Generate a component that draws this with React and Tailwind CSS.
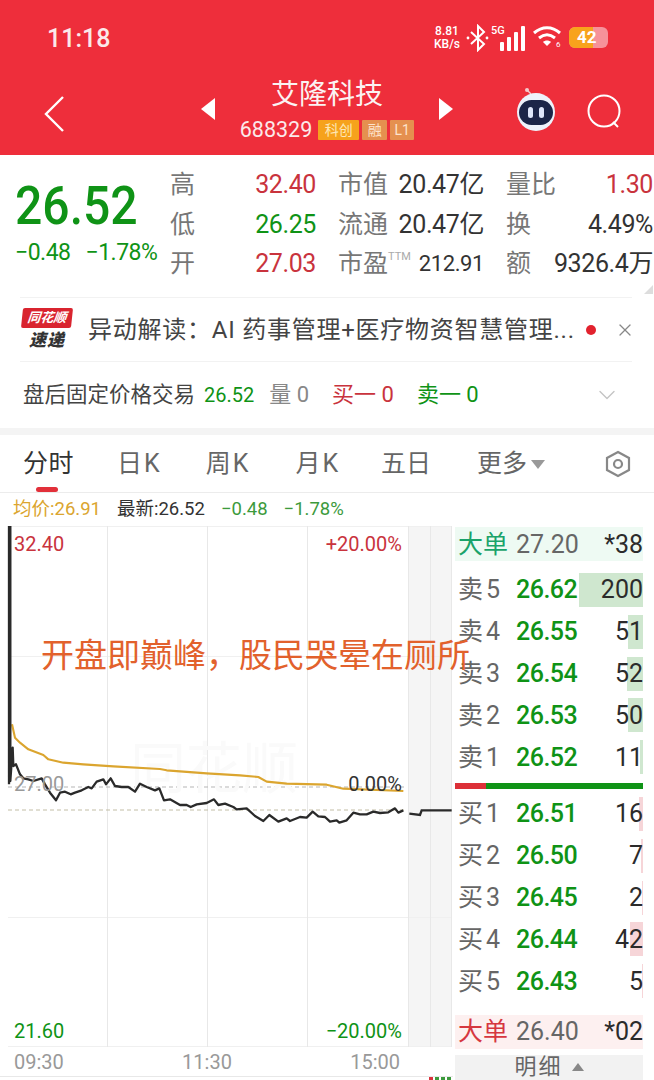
import React from 'react';
import { X, ChevronDown } from 'lucide-react';

const priceLine = [[27,280],[27,-495],[31,-495],[31,270],[38,170],[40,225],[48,220],[60,250],[70,262],[85,265],[100,270],[125,262],[135,280],[150,305],[168,328],[180,305],[195,302],[212,310],[225,305],[245,298],[265,288],[275,292],[290,272],[310,265],[318,280],[332,262],[345,285],[365,288],[385,288],[405,302],[420,278],[440,288],[465,298],[478,292],[492,328],[510,325],[540,342],[560,342],[572,348],[590,340],[620,336],[642,325],[655,342],[675,338],[700,348],[710,355],[740,352],[765,375],[790,390],[808,372],[835,392],[860,382],[870,390],[900,378],[920,380],[938,362],[955,376],[975,378],[990,392],[1010,388],[1018,395],[1040,388],[1060,365],[1080,370],[1100,370],[1120,362],[1140,366],[1165,364],[1185,352],[1195,365],[1210,358]];
const afterLine = [[1228,368],[1260,372],[1265,358],[1355,358]];
const avgLine = [[36,100],[45,140],[60,155],[85,175],[130,192],[145,205],[190,215],[250,220],[340,226],[480,234],[500,238],[620,247],[720,253],[775,258],[800,272],[860,278],[980,281],[1030,293],[1210,300]];

const toPoints = (pts) => pts.map(([x, y]) => `${x / 3},${y / 3 + 165}`).join(' ');

const stats = [
  [
    { label: '高', value: '32.40', color: 'text-[#c9333d]', size: 'text-[25px]' },
    { label: '市值', value: '20.47亿', color: 'text-[#333]', size: 'text-[25px]' },
    { label: '量比', value: '1.30', color: 'text-[#c9333d]', size: 'text-[25px]' },
  ],
  [
    { label: '低', value: '26.25', color: 'text-[#0f9316]', size: 'text-[25px]' },
    { label: '流通', value: '20.47亿', color: 'text-[#333]', size: 'text-[25px]' },
    { label: '换', value: '4.49%', color: 'text-[#333]', size: 'text-[25px]' },
  ],
  [
    { label: '开', value: '27.03', color: 'text-[#c9333d]', size: 'text-[25px]' },
    { label: '市盈', tm: true, value: '212.91', color: 'text-[#333]', size: 'text-[22px]' },
    { label: '额', value: '9326.4万', color: 'text-[#333]', size: 'text-[25px]' },
  ],
];

const asks = [
  { name: '卖', n: 5, price: '26.62', qty: '200', w: 64 },
  { name: '卖', n: 4, price: '26.55', qty: '51', w: 15 },
  { name: '卖', n: 3, price: '26.54', qty: '52', w: 16 },
  { name: '卖', n: 2, price: '26.53', qty: '50', w: 15 },
  { name: '卖', n: 1, price: '26.52', qty: '11', w: 3 },
];

const bids = [
  { name: '买', n: 1, price: '26.51', qty: '16', w: 4 },
  { name: '买', n: 2, price: '26.50', qty: '7', w: 2 },
  { name: '买', n: 3, price: '26.45', qty: '2', w: 1 },
  { name: '买', n: 4, price: '26.44', qty: '42', w: 13 },
  { name: '买', n: 5, price: '26.43', qty: '5', w: 1 },
];

const StatusIcons = () => (
  <div className="flex items-center">
    <div className="flex w-[30px] flex-col items-center text-[12px] leading-[13px] font-medium text-white">
      <span>8.81</span>
      <span>KB/s</span>
    </div>
    <svg width="26" height="28" viewBox="0 0 26 28" fill="none" stroke="#fff" strokeWidth="2" className="ml-[3px]">
      <path d="M6 8l13 12-6 6V2l6 6L6 20" />
      <circle cx="3" cy="14" r="1.4" fill="#fff" stroke="none" />
      <circle cx="22" cy="14" r="1.4" fill="#fff" stroke="none" />
    </svg>
    <svg width="40" height="28" viewBox="0 0 40 28" className="-ml-[2px]">
      <text x="2" y="10" fontSize="11" fill="#fff" fontWeight="500" fontFamily="Roboto">5G</text>
      <rect x="11" y="18" width="4" height="9" rx="1" fill="#fff" />
      <rect x="18" y="13" width="4" height="14" rx="1" fill="#fff" />
      <rect x="25" y="8" width="4" height="19" rx="1" fill="#fff" />
      <rect x="32" y="2" width="4" height="25" rx="1" fill="#fff" />
    </svg>
    <svg width="32" height="28" viewBox="0 0 32 28" fill="none" stroke="#fff" strokeWidth="3" className="ml-[3px]">
      <path d="M2 9c8-7 18-7 26 0" />
      <path d="M7 14c5-4 11-4 16 0" />
      <path d="M15 22l-4-4c2-2 6-2 8 0z" fill="#fff" stroke="none" />
      <text x="24" y="23" fontSize="8" fill="#fff" stroke="none" fontFamily="Roboto">6</text>
    </svg>
    <div className="relative ml-[5px] flex h-[21px] w-[39px] items-center overflow-hidden rounded-[6px] bg-[#f6929a]">
      <div className="h-full w-[24px] bg-[#f8a31c]" />
      <span className="absolute left-[8px] top-0 text-[17px] leading-[21px] font-bold text-white">42</span>
    </div>
  </div>
);

const BotIcon = () => (
  <svg width="44" height="46" viewBox="0 0 44 46">
    <path d="M17 8l-4-4" stroke="#f4c9cc" strokeWidth="1.5" />
    <circle cx="13" cy="4" r="2" fill="#f4c9cc" />
    <circle cx="22" cy="26" r="19" fill="#eef2fb" />
    <rect x="5" y="14" width="34" height="25" rx="12.5" fill="#1c2548" />
    <rect x="14" y="21" width="5" height="11" rx="2.5" fill="#dfe6fa" />
    <rect x="25" y="21" width="5" height="11" rx="2.5" fill="#dfe6fa" />
  </svg>
);

const LogoBadge = () => (
  <div className="flex w-[50px] flex-col items-center">
    <div className="h-[20px] w-[50px] -skew-x-6 rounded-[2px] bg-[#d9242f] text-center text-[13px] leading-[20px] font-bold italic text-white">同花顺</div>
    <div className="mt-[1px] text-[17px] leading-[22px] font-black italic tracking-[1px] text-[#333]">速递</div>
  </div>
);

const BookRow = ({ row, barColor }) => (
  <div className="relative flex h-[41.8px] items-center">
    <div className={`absolute right-0 top-[4px] h-[34px] ${barColor}`} style={{ width: row.w }} />
    <span className="relative w-[27px] text-[25px] leading-none text-[#666]">{row.name}</span>
    <span className="relative w-[31px] pl-[1px] text-[25px] leading-none text-[#666]">{row.n}</span>
    <span className="relative w-[60px] text-[25px] leading-none font-medium tracking-[-0.5px] text-[#0f9316]">{row.price}</span>
    <span className="relative flex-1 text-right text-[25px] leading-none text-[#2b2b2b]">{row.qty}</span>
  </div>
);

const BigOrder = ({ color, bg, price, qty }) => (
  <div className={`flex h-[34px] items-center ${bg}`}>
    <span className={`w-[61px] pl-[3px] text-[25px] leading-none ${color}`}>大单</span>
    <span className="w-[65px] text-[25px] leading-none text-[#666]">{price}</span>
    <span className="flex-1 text-right text-[25px] leading-none text-[#2b2b2b]">{qty}</span>
  </div>
);

const Chart = () => (
  <div className="relative h-[521px]">
    <svg width="453" height="521" viewBox="0 0 453 521" className="block">
      <rect x="408" y="0" width="43" height="521" fill="#f5f5f5" />
      <g stroke="#f0f0f0" strokeWidth="1">
        <line x1="8" y1="0.5" x2="452" y2="0.5" />
        <line x1="8" y1="130.5" x2="452" y2="130.5" />
        <line x1="8" y1="391.5" x2="452" y2="391.5" />
        <line x1="8" y1="520.5" x2="452" y2="520.5" />
      </g>
      <g stroke="#e8e8e8" strokeWidth="1">
        <line x1="107.5" y1="0" x2="107.5" y2="521" />
        <line x1="207.5" y1="0" x2="207.5" y2="521" />
        <line x1="307.5" y1="0" x2="307.5" y2="521" />
        <line x1="408.5" y1="0" x2="408.5" y2="521" />
        <line x1="430.5" y1="0" x2="430.5" y2="521" />
        <line x1="451.5" y1="0" x2="451.5" y2="521" />
      </g>
      <line x1="8" y1="261" x2="404" y2="261" stroke="#b5b5b5" strokeWidth="1" strokeDasharray="4 3" />
      <line x1="8" y1="284" x2="404" y2="284" stroke="#c2bda5" strokeWidth="1" strokeDasharray="4 3" />
      <text x="130" y="262" fontSize="56" fill="#fafafa" fontFamily="'Noto Sans CJK SC'">同花顺</text>
      <polyline points={toPoints(avgLine)} fill="none" stroke="#dba52f" strokeWidth="2.1" strokeLinejoin="round" />
      <polyline points={toPoints(priceLine)} fill="none" stroke="#2a2a2a" strokeWidth="2.3" strokeLinejoin="round" />
      <polyline points={toPoints(afterLine)} fill="none" stroke="#2a2a2a" strokeWidth="2.3" />
    </svg>
    <span className="absolute left-[14px] top-[6px] text-[20px] leading-[24px] text-[#c9333d]">32.40</span>
    <span className="absolute right-[51px] top-[6px] text-[20px] leading-[24px] text-[#c9333d]">+20.00%</span>
    <span className="absolute left-[14px] top-[246px] text-[20px] leading-[24px] text-[#999]">27.00</span>
    <span className="absolute right-[51px] top-[246px] text-[20px] leading-[24px] text-[#333]">0.00%</span>
    <span className="absolute bottom-[4px] left-[14px] text-[20px] leading-[24px] text-[#0f9316]">21.60</span>
    <span className="absolute bottom-[4px] right-[51px] text-[20px] leading-[24px] text-[#0f9316]">−20.00%</span>
  </div>
);

export default function App() {
  return (
    <div className="relative h-[1080px] w-[654px] overflow-hidden bg-white font-['Roboto','Noto_Sans_CJK_SC',sans-serif]">
      {/* Red header */}
      <div className="h-[155px] bg-[#ee2e3b]">
        <div className="flex h-[75px] items-center justify-between pl-[47px] pr-[46px]">
          <span className="mt-[2px] text-[25px] leading-none font-medium text-[#fbe9ea]">11:18</span>
          <StatusIcons />
        </div>
        <div className="grid grid-cols-[190px_274px_190px]">
          <div className="pl-[43px] pt-[20px]">
            <svg width="23" height="38" viewBox="0 0 23 38" fill="none" stroke="#fff" strokeWidth="2.4">
              <path d="M20 2L3 19l17 17" />
            </svg>
          </div>
          <div className="flex items-center justify-between px-[11px]">
            <div className="h-0 w-0 border-y-[11px] border-r-[14px] border-y-transparent border-r-white" />
            <div className="flex flex-col items-center">
              <span className="text-[28px] leading-[40px] text-[#fbf3f3]">艾隆科技</span>
              <div className="mt-[2px] flex items-center">
                <span className="text-[21.5px] leading-[26px] text-[#fbe9ea]">688329</span>
                <span className="ml-[6px] h-[20px] w-[41px] rounded-[1px] bg-[#f6a21c] text-center text-[14px] leading-[20px] text-[#fde8b8]">科创</span>
                <span className="ml-[3px] h-[20px] w-[25px] rounded-[1px] bg-[#e5904f] text-center text-[14px] leading-[20px] text-[#fde3cc]">融</span>
                <span className="ml-[3px] h-[20px] w-[24px] rounded-[1px] bg-[#e5904f] text-center text-[14px] leading-[20px] text-[#fde3cc]">L1</span>
              </div>
            </div>
            <div className="h-0 w-0 border-y-[11px] border-l-[14px] border-y-transparent border-l-white" />
          </div>
          <div className="flex items-center pl-[50px]">
            <BotIcon />
            <svg width="38" height="38" viewBox="0 0 38 38" fill="none" stroke="#fff" strokeWidth="2" className="ml-[28px] mt-[6px]">
              <circle cx="18" cy="18" r="15.5" />
              <path d="M27 29l5 5" />
            </svg>
          </div>
        </div>
      </div>

      {/* Quote */}
      <div className="relative flex h-[142px]">
        <div className="w-[170px] shrink-0 pl-[15px] pt-[20px]">
          <div className="origin-left scale-x-[0.89] text-[54px] leading-[62px] font-medium text-[#0f9316]">26.52</div>
          <div className="mt-[2px] flex gap-[15px] text-[23px] leading-[28px] tracking-[-0.5px] text-[#0f9316]">
            <span>−0.48</span>
            <span>−1.78%</span>
          </div>
        </div>
        <div className="w-[484px] pt-[10px]">
          {stats.map((row) => (
            <div key={row[0].label} className="grid h-[39.5px] grid-cols-[146px_146px_147px] items-center gap-x-[22px]">
              {row.map((cell) => (
                <div key={cell.label} className="flex items-center justify-between">
                  <span className="text-[25px] leading-none text-[#777]">
                    {cell.label}
                    {cell.tm && <span className="align-top text-[11px] text-[#aaa]">TTM</span>}
                  </span>
                  <span className={`leading-none tracking-[-0.4px] ${cell.size} ${cell.color}`}>{cell.value}</span>
                </div>
              ))}
            </div>
          ))}
        </div>
        <div className="absolute bottom-[3px] right-[1px] h-0 w-0 border-b-[9px] border-l-[9px] border-b-[#ddd] border-l-transparent" />
      </div>

      {/* News line */}
      <div className="mx-[20px] flex h-[65px] w-[612px] items-center border-y border-[#f2f2f2]">
        <div className="ml-[2px]">
          <LogoBadge />
        </div>
        <span className="ml-[16px] w-[486px] shrink-0 whitespace-nowrap text-[24px] leading-none tracking-[0.75px] text-[#444]">异动解读：AI 药事管理+医疗物资智慧管理...</span>
        <span className="ml-[12px] h-[10px] w-[10px] shrink-0 rounded-full bg-[#e2222e]" />
        <X size={20} strokeWidth={1.5} color="#888" className="ml-[19px] shrink-0" />
      </div>

      {/* After hours */}
      <div className="flex h-[66px] items-center pl-[23px]">
        <span className="text-[21.5px] leading-none text-[#444]">盘后固定价格交易</span>
        <span className="ml-[9px] text-[20px] leading-none text-[#0f9316]">26.52</span>
        <span className="ml-[15px] text-[22px] leading-none text-[#888]">量 0</span>
        <span className="ml-[23px] text-[22px] leading-none text-[#c9333d]">买一 0</span>
        <span className="ml-[23px] text-[22px] leading-none text-[#0f9316]">卖一 0</span>
        <ChevronDown size={28} strokeWidth={1.2} color="#c4c4c4" className="ml-[114px]" />
      </div>

      <div className="h-[7px] bg-[#f4f4f4]" />

      {/* Tabs */}
      <div className="relative flex h-[58px] items-center border-b border-[#ececec] pl-[23px] text-[25px] leading-none text-[#666]">
        <span className="tracking-[0.5px] text-[#333]">分时</span>
        <span className="ml-[43px] tracking-[2px]">日K</span>
        <span className="ml-[44px] tracking-[2px]">周K</span>
        <span className="ml-[45px] tracking-[2px]">月K</span>
        <span className="ml-[41px]">五日</span>
        <span className="ml-[46px]">更多</span>
        <div className="ml-[4px] mt-[2px] h-0 w-0 border-x-[7px] border-t-[9px] border-x-transparent border-t-[#999]" />
        <svg width="28" height="30" viewBox="0 0 28 30" fill="none" stroke="#888" strokeWidth="2.2" className="ml-[59px]">
          <path d="M14 3l11 6v12l-11 6-11-6V9z" />
          <circle cx="14" cy="15" r="4" />
        </svg>
        <div className="absolute bottom-0 left-[36px] h-[5px] w-[22px] rounded-full bg-[#e2303a]" />
      </div>

      {/* Legend */}
      <div className="flex h-[33px] items-center pl-[13px] text-[18.5px] leading-none">
        <span className="text-[#dba52f]">均价:26.91</span>
        <span className="ml-[16px] text-[#333]">最新:26.52</span>
        <span className="ml-[16px] text-[#3c9a3c]">−0.48</span>
        <span className="ml-[16px] text-[#3c9a3c]">−1.78%</span>
      </div>

      {/* Chart + order book */}
      <div className="flex">
        <div className="w-[453px] shrink-0">
          <Chart />
          <div className="flex h-[30px] items-center justify-between border-b border-[#e8e8e8] pl-[14px] pr-[53px] text-[20px] leading-none text-[#999]">
            <span>09:30</span>
            <span>11:30</span>
            <span>15:00</span>
          </div>
          <div className="flex justify-end gap-[2px] pr-[2px]">
            <span className="h-[3px] w-[4px] bg-[#d9333d]" />
            <span className="h-[3px] w-[4px] bg-[#3c9a3c]" />
            <span className="h-[3px] w-[4px] bg-[#3c9a3c]" />
            <span className="h-[3px] w-[4px] bg-[#3c9a3c]" />
          </div>
        </div>
        <div className="flex-1 pl-[2px] pr-[11px] pt-[1px]">
          <BigOrder color="text-[#1aa36a]" bg="bg-[#eefaf3]" price="27.20" qty="*38" />
          <div className="mt-[8px] pl-[3px]">
            {asks.map((row) => (
              <BookRow key={row.n} row={row} barColor="bg-[#cfe7cf]" />
            ))}
          </div>
          <div className="mt-[5px] flex h-[6px]">
            <div className="w-[31px] bg-[#dc3038]" />
            <div className="flex-1 bg-[#0f9316]" />
          </div>
          <div className="mt-[4px] pl-[3px]">
            {bids.map((row) => (
              <BookRow key={row.n} row={row} barColor="bg-[#f6d5d8]" />
            ))}
          </div>
          <div className="mt-[13px]">
            <BigOrder color="text-[#d6373f]" bg="bg-[#fdf0f0]" price="26.40" qty="*02" />
          </div>
          <div className="mt-[6px] flex h-[25px] items-center justify-center bg-[#f2f2f2] text-[22px] leading-none text-[#666]">
            <span className="tracking-[2px]">明细</span>
            <div className="ml-[9px] h-0 w-0 border-x-[6px] border-b-[8px] border-x-transparent border-b-[#888]" />
          </div>
        </div>
      </div>

      {/* Video caption laid over the chart */}
      <span className="absolute left-[41px] top-[635px] whitespace-nowrap text-[33px] leading-[42px] text-[#e2612c]">开盘即巅峰，股民哭晕在厕所</span>
    </div>
  );
}
